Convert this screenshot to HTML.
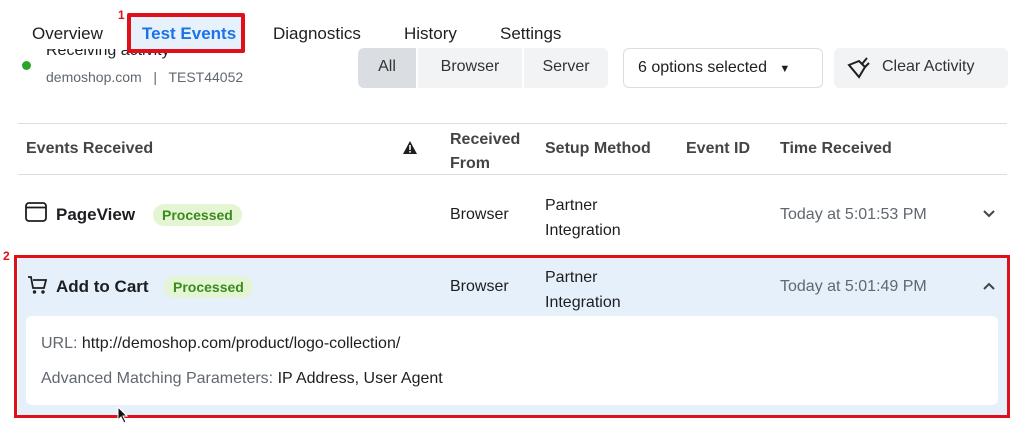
<!DOCTYPE html>
<html><head><style>
*{margin:0;padding:0;box-sizing:border-box}
body{width:1024px;height:427px;background:#fff;font-family:"Liberation Sans",sans-serif;color:#1c1e21;position:relative;overflow:hidden}
.a{position:absolute;white-space:nowrap}
.tab{font-size:17px;top:24px;color:#1c1e21}
.b{font-weight:bold}
.g{color:#606770}
.pill{background:#e3f5d2;color:#3b8a1e;font-weight:bold;font-size:14px;padding:3px 9px;border-radius:12px}
.btn{top:48px;height:40px;background:#f2f3f5;font-size:16px;line-height:38px;text-align:center;color:#333}
</style></head><body>
<div class="a" style="left:46px;top:42px;font-size:16px">Receiving activity</div>
<div class="a" style="left:0;top:0;width:1024px;height:49px;background:#fff"></div>
<div class="a tab" style="left:32px">Overview</div>
<div class="a" style="left:127px;top:13px;width:118px;height:40px;border:4px solid #e0101a;background:#e7f1fc;border-radius:2px"></div>
<div class="a b" style="left:118px;top:8px;color:#e0101a;font-size:12px">1</div>
<div class="a tab b" style="left:142px;color:#1a73e8">Test Events</div>
<div class="a tab" style="left:273px">Diagnostics</div>
<div class="a tab" style="left:404px">History</div>
<div class="a tab" style="left:500px">Settings</div>

<div class="a" style="left:22px;top:61px;width:9px;height:9px;border-radius:50%;background:#2aa52a"></div>
<div class="a g" style="left:46px;top:69px;font-size:14px">demoshop.com &nbsp;&nbsp;|&nbsp;&nbsp; TEST44052</div>

<div class="a btn" style="left:358px;width:58px;background:#dadde1;border-radius:6px 0 0 6px">All</div>
<div class="a btn" style="left:418px;width:104px">Browser</div>
<div class="a btn" style="left:524px;width:84px;border-radius:0 6px 6px 0">Server</div>
<div class="a btn" style="left:623px;width:200px;background:#fff;border:1px solid #dadde1;border-radius:6px;text-align:left;padding-left:14px;color:#1c1e21">6 options selected <span style="font-size:11px;margin-left:8px">▼</span></div>
<div class="a btn" style="left:834px;width:174px;border-radius:6px;text-align:left;padding-left:48px">Clear Activity</div>
<svg class="a" style="left:847px;top:55px" width="24" height="24" viewBox="0 0 24 24" fill="none" stroke="#1c1e21" stroke-width="2"><path d="M2 10l10-4 6 6-6 10z"/><path d="M15 9l5-6M18 12l4-4"/></svg>

<div class="a" style="left:18px;top:123px;width:989px;height:1px;background:#dadde1"></div>
<div class="a b" style="left:26px;top:140px;font-size:16px;color:#444">Events Received</div>
<svg class="a" style="left:402px;top:140px" width="16" height="15" viewBox="0 0 16 15"><path d="M8 1L15 14H1z" fill="#1c1e21"/><rect x="7.2" y="5" width="1.6" height="5" fill="#fff"/><rect x="7.2" y="11" width="1.6" height="1.6" fill="#fff"/></svg>
<div class="a b" style="left:450px;top:128px;font-size:16px;color:#444;line-height:24px">Received<br>From</div>
<div class="a b" style="left:545px;top:140px;font-size:16px;color:#444">Setup Method</div>
<div class="a b" style="left:686px;top:140px;font-size:16px;color:#444">Event ID</div>
<div class="a b" style="left:780px;top:140px;font-size:16px;color:#444">Time Received</div>
<div class="a" style="left:18px;top:174px;width:989px;height:1px;background:#dadde1"></div>

<svg class="a" style="left:25px;top:202px" width="22" height="20" viewBox="0 0 22 20" fill="none" stroke="#1c1e21" stroke-width="1.8"><rect x="1" y="1" width="20" height="18" rx="3"/><path d="M1 5.5h20"/></svg>
<div class="a b" style="left:56px;top:205px;font-size:17px">PageView</div>
<div class="a pill" style="left:153px;top:204px">Processed</div>
<div class="a" style="left:450px;top:206px;font-size:16px">Browser</div>
<div class="a" style="left:545px;top:193px;font-size:16px;line-height:25px">Partner<br>Integration</div>
<div class="a g" style="left:780px;top:206px;font-size:16px">Today at 5:01:53 PM</div>
<svg class="a" style="left:982px;top:209px" width="14" height="10" viewBox="0 0 14 10" fill="none" stroke="#444" stroke-width="2"><path d="M2 2l5 5 5-5"/></svg>

<div class="a" style="left:18px;top:258px;width:989px;height:157px;background:#e6f0fb"></div>
<div class="a" style="left:26px;top:316px;width:972px;height:89px;background:#fff;border-radius:6px"></div>
<div class="a" style="left:14px;top:255px;width:996px;height:163px;border:3.5px solid #e0101a"></div>
<div class="a b" style="left:3px;top:249px;color:#e0101a;font-size:12px">2</div>
<svg class="a" style="left:27px;top:276px" width="20" height="18" viewBox="0 0 20 18" fill="none" stroke="#1c1e21" stroke-width="1.8"><path d="M1 1h3l2 11h11l2-8H6"/><circle cx="7.5" cy="16" r="0.8"/><circle cx="16" cy="16" r="0.8"/></svg>
<div class="a b" style="left:56px;top:277px;font-size:17px">Add to Cart</div>
<div class="a pill" style="left:164px;top:276px">Processed</div>
<div class="a" style="left:450px;top:278px;font-size:16px">Browser</div>
<div class="a" style="left:545px;top:265px;font-size:16px;line-height:25px">Partner<br>Integration</div>
<div class="a g" style="left:780px;top:278px;font-size:16px">Today at 5:01:49 PM</div>
<svg class="a" style="left:982px;top:281px" width="14" height="10" viewBox="0 0 14 10" fill="none" stroke="#444" stroke-width="2"><path d="M2 8l5-5 5 5"/></svg>

<div class="a" style="left:41px;top:335px;font-size:16px"><span class="g">URL:</span> http://demoshop.com/product/logo-collection/</div>
<div class="a" style="left:41px;top:370px;font-size:16px"><span class="g">Advanced Matching Parameters:</span> IP Address, User Agent</div>
<svg class="a" style="left:117px;top:406px" width="12" height="18" viewBox="0 0 12 18"><path d="M1 1v13l3-3 3 6 2-1-3-6h4z" fill="#111" stroke="#fff" stroke-width="1"/></svg>
</body></html>
